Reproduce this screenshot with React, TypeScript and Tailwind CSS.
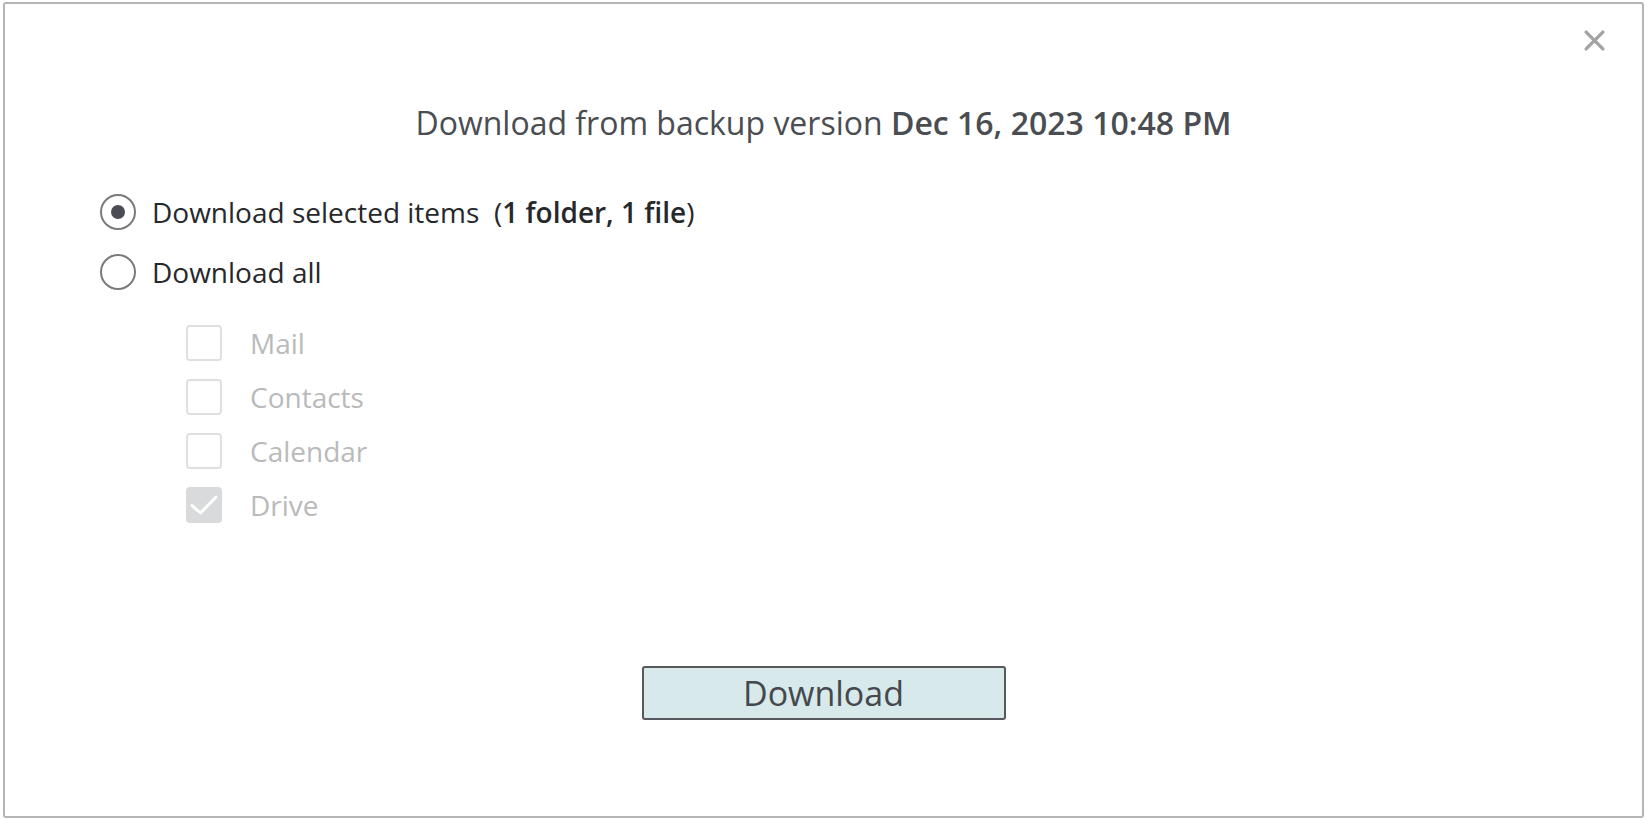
import React, { useState } from 'react';

const items = [
  { name: 'Mail', checked: false },
  { name: 'Contacts', checked: false },
  { name: 'Calendar', checked: false },
  { name: 'Drive', checked: true },
];

function Radio({ checked }: { checked: boolean }) {
  return (
    <span className="flex h-[36px] w-[36px] shrink-0 items-center justify-center rounded-full border-2 border-[#7a7a7a] bg-white">
      {checked && <span className="h-[14px] w-[14px] rounded-full bg-[#4a4d54]" />}
    </span>
  );
}

function Checkbox({ checked }: { checked: boolean }) {
  return (
    <span
      className={
        checked
          ? 'flex h-[36px] w-[36px] shrink-0 items-center justify-center rounded-[4px] bg-[#d9dadb]'
          : 'flex h-[36px] w-[36px] shrink-0 items-center justify-center rounded-[4px] border-2 border-[#e0e0e0] bg-white'
      }
    >
      {checked && (
        <svg width="36" height="36" viewBox="0 0 36 36" fill="none" stroke="#ffffff" strokeWidth="3" strokeLinecap="round" strokeLinejoin="round">
          <path d="M6 18.5l8.5 7.5L30 10" />
        </svg>
      )}
    </span>
  );
}

export default function App() {
  const [mode, setMode] = useState<'selected' | 'all'>('selected');

  return (
    <div
      className="h-[820px] w-full overflow-hidden bg-white pb-[2px] pl-[3px] pr-[4px] pt-[2px]"
      style={{ fontFamily: '"Open Sans", "Noto Sans", sans-serif' }}
    >
      <div className="relative flex h-full flex-col rounded-[3px] border-2 border-[#b5b5b5] bg-white">
        {/* Close */}
        <button type="button" className="absolute right-[36px] top-[25px] p-0 text-[#a3a3a3]" aria-label="Close">
          <svg width="23" height="23" viewBox="0 0 22 22" fill="none" stroke="currentColor" strokeWidth="3.2" strokeLinecap="round">
            <path d="M3 3l16 16M19 3L3 19" />
          </svg>
        </button>

        {/* Title */}
        <h2 className="mt-[97px] text-center text-[32px] leading-[44px] text-[#4a4d52]">
          Download from backup version <span className="font-semibold">Dec 16, 2023 10:48 PM</span>
        </h2>

        {/* Options */}
        <div className="mt-[37px] flex flex-col pl-[95px]">
          <label className="flex h-[60px] cursor-pointer items-center gap-[16px]" onClick={() => setMode('selected')}>
            <Radio checked={mode === 'selected'} />
            <span className="text-[28px] text-[#26282b]">
              Download selected items{'\u00a0\u00a0'}(<span className="font-semibold">1 folder, 1 file</span>)
            </span>
          </label>
          <label className="flex h-[60px] cursor-pointer items-center gap-[16px]" onClick={() => setMode('all')}>
            <Radio checked={mode === 'all'} />
            <span className="text-[28px] text-[#26282b]">Download all</span>
          </label>

          <div className="mt-[23px] flex flex-col gap-[18px] pl-[86px]">
            {items.map((it) => (
              <div key={it.name} className="flex h-[36px] items-center gap-[28px]">
                <Checkbox checked={it.checked} />
                <span className="text-[28px] text-[#b9babb]">{it.name}</span>
              </div>
            ))}
          </div>
        </div>

        {/* Footer */}
        <div className="mt-auto flex justify-center pb-[96px]">
          <button
            type="button"
            className="h-[54px] w-[364px] rounded-[3px] border-2 border-[#55585c] bg-[#d7e9eb] text-[34px] leading-none text-[#45484c]"
          >
            Download
          </button>
        </div>
      </div>
    </div>
  );
}
